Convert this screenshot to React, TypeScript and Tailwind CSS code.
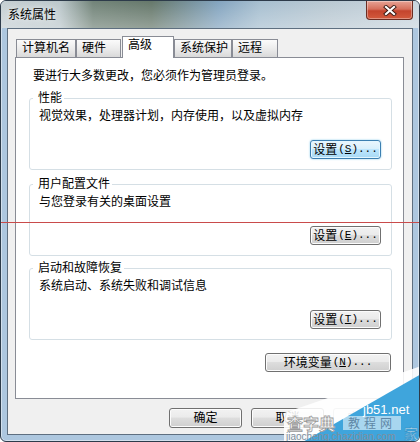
import React from 'react';

type BtnProps = {
  children: React.ReactNode;
  className?: string;
  primary?: boolean;
  disabled?: boolean;
};

const Button = ({ children, className = '', primary = false, disabled = false }: BtnProps) => (
  <button
    type="button"
    className={`flex items-center justify-center rounded-[3px] border text-[12px] leading-none ${
      primary
        ? 'border-[#3c7fb1] bg-[linear-gradient(#eaf6fd_0%,#d9f0fc_45%,#bee6fd_50%,#a7d9f5_100%)] shadow-[inset_0_0_0_1px_#e3f6ff,0_0_2px_#7cc4e8] text-black'
        : disabled
          ? 'border-[#adb2b5] bg-[#f4f4f4] text-[#838383]'
          : 'border-[#707070] bg-[linear-gradient(#f2f2f2_0%,#ebebeb_45%,#dddddd_50%,#cfcfcf_100%)] shadow-[inset_0_0_0_1px_#fcfcfc] text-black'
    } ${className}`}
  >
    {children}
  </button>
);

// 设置(S)... style label with an underlined access key
const Hot = ({ zh, k, dots = true }: { zh: string; k: string; dots?: boolean }) => (
  <>
    <span>{zh}</span>
    <span className="ml-[1px] font-['Liberation_Mono',monospace] text-[11px]">
      (<span className="underline underline-offset-[1px]">{k}</span>){dots ? '...' : ''}
    </span>
  </>
);

type GroupProps = {
  title: string;
  desc: string;
  k: string;
  primary?: boolean;
  className?: string;
};

const Group = ({ title, desc, k, primary = false, className = '' }: GroupProps) => (
  <fieldset className={`w-[363px] rounded-[3px] border border-[#d5dfe5] pb-[10px] ${className}`}>
    <legend className="ml-[3px] pl-[5px] pr-[2px] leading-[14px]">{title}</legend>
    <div className="flex flex-col">
      <p className="ml-[9px] mt-[4px] leading-[14px]">{desc}</p>
      <Button primary={primary} className="mt-[17px] mr-[10px] h-[19px] w-[71px] self-end">
        <Hot zh="设置" k={k} />
      </Button>
    </div>
  </fieldset>
);

const tabs = [
  { label: '计算机名', cls: 'w-[60px]' },
  { label: '硬件', cls: 'w-[45px]' },
  { label: '高级', cls: 'w-[52px] ml-[1px]', active: true },
  { label: '系统保护', cls: 'w-[58px]' },
  { label: '远程', cls: 'w-[46px]' },
];

const Watermark = () => (
  <svg
    className="absolute left-[270px] top-[355px]"
    width="150"
    height="87"
    viewBox="0 0 150 87"
    fontFamily="'Liberation Sans','Noto Sans CJK SC',sans-serif"
  >
    <polygon points="13,87 13,57 150,10 150,87" fill="#ffffff" opacity="0.88" />
    <polygon points="30,87 150,18 150,87" fill="#3fa5dc" />
    <text x="92" y="58" fontSize="13" fill="#ffffff">jb51.net</text>
    <rect x="72" y="60" width="58" height="14" fill="#ffffff" opacity="0.55" />
    <text x="77" y="72" fontSize="12" letterSpacing="4" fill="#5f87a6">教程网</text>
    <text x="16" y="74" fontSize="16" fontWeight="bold" fill="#ffffff" stroke="#9a9a9a" strokeWidth="0.8">查字典</text>
    <text x="15" y="84" fontSize="10" fill="#7f8f9c">jiaocheng.chazidian.com</text>
    <text x="133" y="83" fontSize="14" fill="#ffffff" stroke="#2f8fc6" strokeWidth="0.6">家</text>
  </svg>
);

export default function App() {
  return (
    <div className="relative flex h-[442px] w-[420px] flex-col overflow-hidden rounded-[6px] border border-[#2d3b4a] bg-[#adc7df] font-['Liberation_Sans','Noto_Sans_CJK_SC',sans-serif] text-[12px] text-black shadow-[inset_0_0_0_1px_rgba(255,255,255,0.45)]">
      {/* glass title bar */}
      <div className="flex h-[27px] justify-between bg-[linear-gradient(rgba(255,255,255,0)_0%,rgba(255,255,255,0.3)_100%),linear-gradient(90deg,#c5cfd3_0%,#bcc8cc_14%,#728479_22%,#66786b_36%,#83a4bf_52%,#a7bfd0_62%,#b9c8d2_78%,#c8d5de_100%)]">
        <span className="pl-[7px] pt-[7px] leading-[14px] [text-shadow:0_0_6px_#ffffff]">系统属性</span>
        <div className="mr-[6px] flex h-[19px] w-[47px] items-center justify-center rounded-b-[4px] border border-t-0 border-[#6b2d23] bg-[linear-gradient(#e7a395_0%,#d6705c_45%,#c4442d_55%,#d35a3d_100%)] shadow-[inset_0_0_0_1px_rgba(255,255,255,0.35)]">
          <svg width="14" height="11" viewBox="0 0 14 11">
            <path d="M3 2 L11 9 M11 2 L3 9" stroke="#3b1a14" strokeWidth="4" strokeLinecap="square" />
            <path d="M3 2 L11 9 M11 2 L3 9" stroke="#ffffff" strokeWidth="2.2" strokeLinecap="square" />
          </svg>
        </div>
      </div>

      {/* client area */}
      <div className="mx-[6px] flex h-[407px] flex-col border border-[#5e6f80] bg-[#f0f0f0] pl-[7px] pt-[7px]">
        <div className="flex h-[21px] items-end pl-[1px]">
          {tabs.map((t) =>
            t.active ? (
              <div
                key={t.label}
                className={`relative z-10 mb-[-1px] h-[22px] border border-b-0 border-[#898c95] bg-white pl-[5px] pt-[1px] leading-[14px] ${t.cls}`}
              >
                {t.label}
              </div>
            ) : (
              <div
                key={t.label}
                className={`h-[18px] border border-b-0 border-[#898c95] bg-[linear-gradient(#fbfbfb,#ececec_50%,#d9d9d9)] pl-[5px] leading-[17px] ${t.cls}`}
              >
                {t.label}
              </div>
            )
          )}
        </div>

        <div className="h-[342px] w-[389px] border border-[#898c95] bg-white pl-[13px] pt-[11px]">
          <div className="flex w-[363px] flex-col">
            <p className="ml-[4px] leading-[14px]">要进行大多数更改，您必须作为管理员登录。</p>
            <Group className="mt-[8px]" title="性能" desc="视觉效果，处理器计划，内存使用，以及虚拟内存" k="S" primary />
            <Group className="mt-[7px]" title="用户配置文件" desc="与您登录有关的桌面设置" k="E" />
            <Group className="mt-[5px]" title="启动和故障恢复" desc="系统启动、系统失败和调试信息" k="T" />
            <Button className="mt-[13px] mr-[1px] h-[19px] w-[126px] self-end">
              <Hot zh="环境变量" k="N" />
            </Button>
          </div>
        </div>

        <div className="mt-[9px] flex justify-end gap-[9px] pr-[6px]">
          <Button className="h-[20px] w-[73px]">确定</Button>
          <Button className="h-[20px] w-[73px]">取消</Button>
          <Button disabled className="h-[20px] w-[73px]">
            <Hot zh="应用" k="A" dots={false} />
          </Button>
        </div>
      </div>

      {/* annotation line and site watermark drawn over the screenshot */}
      <div className="absolute left-0 top-[221px] h-[1px] w-full bg-[#c94b4b]" />
      <Watermark />
    </div>
  );
}
